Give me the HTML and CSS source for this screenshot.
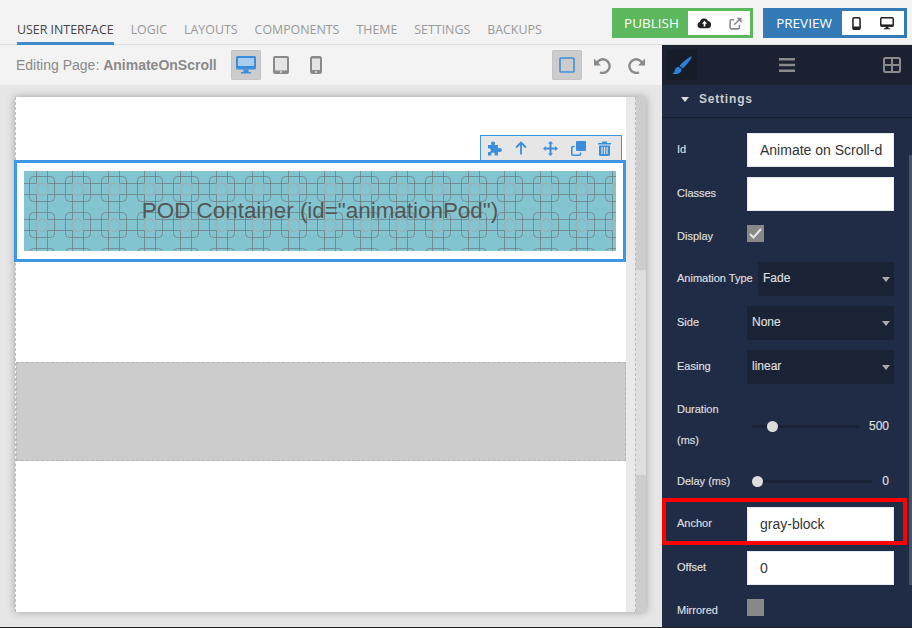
FILE: index.html
```html
<!doctype html>
<html lang="en">
    <head>
        <meta charset="utf-8">
        <title>AnimateOnScroll - User Interface</title>
        <link rel="stylesheet" href="styles.css">
    </head>
    <body>
        <div class="app">
            <header class="topbar">
                <nav class="tabs">
                    <a class="tab active">USER INTERFACE</a>
                    <a class="tab">LOGIC</a>
                    <a class="tab">LAYOUTS</a>
                    <a class="tab">COMPONENTS</a>
                    <a class="tab">THEME</a>
                    <a class="tab">SETTINGS</a>
                    <a class="tab">BACKUPS</a>
                </nav>
                <div class="action publish">
                    <span class="action-name">PUBLISH</span>
                    <div class="action-icons">
                        <svg width="15" height="12" viewBox="0 0 17 14"><path fill="#222" d="M4 13a3.600 3.600 0 0 1-.8-7.100A5 5 0 0 1 12.600 4.600a4.300 4.300 0 0 1 .4 8.400z"/><path fill="#fff" d="M8.500 4.500 11.500 8H9.500v3h-2V8h-2z"/></svg>
                        <svg width="13" height="13" viewBox="0 0 15 15"><path fill="none" stroke="#8a8a8a" stroke-width="1.800" d="M12 9v3.500a1.200 1.200 0 0 1-1.200 1.200H2.500a1.200 1.200 0 0 1-1.200-1.200V4.300a1.200 1.200 0 0 1 1.200-1.200H6M6 9l7-7"/><path fill="#8a8a8a" d="M8.500.8H14.500V6.800z"/></svg>
                    </div>
                </div>
                <div class="action preview">
                    <span class="action-name">PREVIEW</span>
                    <div class="action-icons">
                        <svg width="9" height="13" viewBox="0 0 10 15"><rect x=".9" y=".9" width="8.200" height="13.200" rx="1.500" fill="none" stroke="#222" stroke-width="1.800"/><rect x="1" y="11" width="8" height="3.500" fill="#222"/></svg>
                        <svg width="14" height="13" viewBox="0 0 15 14"><rect x=".8" y=".8" width="13.400" height="9" rx="1" fill="none" stroke="#222" stroke-width="1.600"/><rect x="1" y="8" width="13" height="2.500" fill="#222"/><path fill="#222" d="M6 10.500h3V12h2v1.300H4V12h2z"/></svg>
                    </div>
                </div>
            </header>

            <div class="workspace">
                <div class="editor">
                    <div class="toolbar">
                        <span class="page-name">Editing Page: <b>AnimateOnScroll</b></span>
                        <div class="device-btns">
                            <button class="tool on">
                                <svg width="20" height="18" viewBox="0 0 20 18"><rect y="0" width="20" height="13.500" rx="1.500" fill="#3b8ede"/><rect x="2" y="2" width="16" height="8" fill="#a9cdee"/><path fill="#3b8ede" d="M7.500 13.500h5V16H15v1.500H5V16h2.500z"/></svg>
                            </button>
                            <button class="tool">
                                <svg width="16" height="18" viewBox="0 0 16 18"><rect width="16" height="18" rx="2" fill="#8a8a8a"/><rect x="2" y="2" width="12" height="12.500" fill="#e4e4e4"/><circle cx="8" cy="16" r="1" fill="#e4e4e4"/></svg>
                            </button>
                            <button class="tool">
                                <svg width="12" height="18" viewBox="0 0 12 18"><rect width="12" height="18" rx="2.500" fill="#8a8a8a"/><rect x="2" y="2.500" width="8" height="11.500" fill="#e4e4e4"/><circle cx="6" cy="16" r="1" fill="#e4e4e4"/></svg>
                            </button>
                        </div>
                        <div class="history-btns">
                            <button class="tool on">
                                <svg width="16" height="16" viewBox="0 0 16 16"><rect x="1" y="1" width="14" height="14" rx="1" fill="none" stroke="#3b8ede" stroke-width="1.600"/></svg>
                            </button>
                            <button class="tool">
                                <svg width="18" height="17" viewBox="0 0 18 17"><path fill="none" stroke="#8a8a8a" stroke-width="2.400" d="M3.500 6.500A6.800 6.800 0 1 1 7 15.300"/><path fill="#8a8a8a" d="M1 1.500 8 8.500H1z"/></svg>
                            </button>
                            <button class="tool">
                                <svg width="18" height="17" viewBox="0 0 18 17"><path fill="none" stroke="#8a8a8a" stroke-width="2.400" d="M14.500 6.500A6.800 6.800 0 1 0 11 15.300"/><path fill="#8a8a8a" d="M17 1.500 10 8.500h7z"/></svg>
                            </button>
                        </div>
                    </div>

                    <div class="canvas">
                        <div class="sheet">
                            <div class="page">
                                <div class="selected">
                                    <div class="element-tools">
                                        <svg width="16" height="15" viewBox="0 0 16 15"><path fill="#3b8ede" d="M1 4h3.500C3.500 2.500 4 .5 6 .5S8.500 2.500 7.500 4H11v3.500c1.500-1 3.800-.6 3.800 1.500s-2.300 2.500-3.800 1.500V14.500H7.500c.8-1.500.3-3-1.500-3s-2.300 1.500-1.500 3H1v-3.500c1.200.6 2.800 0 2.800-1.700S2.200 6.700 1 7.500z"/></svg>
                                        <svg width="12" height="14" viewBox="0 0 12 14"><path fill="none" stroke="#3b8ede" stroke-width="1.800" d="M6 13.500V1.500M1 6.500l5-5 5 5"/></svg>
                                        <svg class="move" width="15" height="15" viewBox="0 0 15 15"><path fill="#3b8ede" d="M7.500 0 10 2.800H8.500V6.500H12.200V5L15 7.500 12.200 10V8.500H8.500V12.200H10L7.500 15 5 12.200H6.500V8.500H2.800V10L0 7.500 2.800 5V6.500H6.500V2.800H5z"/></svg>
                                        <svg width="15" height="15" viewBox="0 0 15 15"><rect x="5" y="0" width="10" height="10" rx="1" fill="#3b8ede"/><path fill="none" stroke="#3b8ede" stroke-width="1.600" d="M3.500 5.500H2A1.200 1.200 0 0 0 .8 6.700V13A1.200 1.200 0 0 0 2 14.200H8.300A1.200 1.200 0 0 0 9.500 13V11.500"/></svg>
                                        <svg width="13" height="15" viewBox="0 0 13 15"><path fill="#3b8ede" d="M0 2h4V.5h5V2h4v1.500H0zM1 4.500h11V13.500A1.500 1.500 0 0 1 10.500 15h-8A1.500 1.500 0 0 1 1 13.500z"/><path stroke="#e6e6e6" stroke-width="1.200" d="M4 6v7M6.500 6v7M9 6v7"/></svg>
                                    </div>
                                    <div class="pod">POD Container (id="animationPod")</div>
                                </div>
                                <div class="gray-block"></div>
                            </div>
                            <div class="gutter"></div>
                            <div class="page-scroll"><div class="page-scroll-mid"></div></div>
                        </div>
                    </div>
                </div>

                <aside class="sidebar">
                    <div class="side-tabs">
                        <button class="side-tab on">
                            <svg width="20" height="19" viewBox="0 0 20 19"><path fill="#2f7fd6" d="M19.500.2C16 1.800 10.500 5.800 7.600 9.800l3.200 2.600C14.500 9 18.500 4 19.800.9zM6.600 10.800C3.800 10.900 3 13 2.600 15 2.300 16.500 1.500 17.200.2 17.800c3.500 1 8.800.5 9.500-4.500z"/></svg>
                        </button>
                        <button class="side-tab">
                            <svg width="16" height="14" viewBox="0 0 16 14"><path fill="#8b8b8b" d="M0 0h16v2.400H0zM0 5.800h16v2.400H0zM0 11.600h16V14H0z"/></svg>
                        </button>
                        <button class="side-tab">
                            <svg width="18" height="16" viewBox="0 0 18 16"><rect x="1" y="1" width="16" height="14" rx="1.500" fill="none" stroke="#8b8b8b" stroke-width="2"/><path fill="#8b8b8b" d="M1 7h16v2H1zM8 1h2v14H8z"/></svg>
                        </button>
                    </div>
                    <div class="settings">
                        <div class="settings-head"><i class="caret"></i>Settings</div>
                        <div class="field">
                            <label>Id</label>
                            <div class="text-input">Animate on Scroll-d</div>
                        </div>
                        <div class="field">
                            <label>Classes</label>
                            <div class="text-input"></div>
                        </div>
                        <div class="field check-field">
                            <label>Display</label>
                            <div class="check"><svg width="13" height="11" viewBox="0 0 13 11"><path fill="none" stroke="#e8e8e8" stroke-width="2" d="M1 6l3.500 3.500L12 1"/></svg></div>
                        </div>
                        <div class="field">
                            <label class="auto">Animation Type</label>
                            <div class="select">Fade<i class="caret small"></i></div>
                        </div>
                        <div class="field">
                            <label>Side</label>
                            <div class="select">None<i class="caret small"></i></div>
                        </div>
                        <div class="field">
                            <label>Easing</label>
                            <div class="select">linear<i class="caret small"></i></div>
                        </div>
                        <div class="field slider-field duration">
                            <label>Duration<br>(ms)</label>
                            <div class="slider"><div class="track short"><i class="thumb" style="left:20px"></i></div><span class="value">500</span></div>
                        </div>
                        <div class="field slider-field delay">
                            <label>Delay (ms)</label>
                            <div class="slider"><div class="track long"><i class="thumb" style="left:5px"></i></div><span class="value">0</span></div>
                        </div>
                        <div class="field anchor">
                            <label>Anchor</label>
                            <div class="text-input">gray-block</div>
                        </div>
                        <div class="field">
                            <label>Offset</label>
                            <div class="text-input">0</div>
                        </div>
                        <div class="field check-field">
                            <label>Mirrored</label>
                            <div class="check"></div>
                        </div>
                        <div class="side-scroll"></div>
                    </div>
                </aside>
            </div>
        </div>
    </body>
</html>
```

FILE: styles.css
```css
* {box-sizing: border-box;}
html, body {margin: 0; height: 100%;}
body {font: 14px "Liberation Sans", Arial, sans-serif; overflow: hidden; background: #f3f3f3;}
button {border: 0; padding: 0; background: none; display: flex; align-items: center; justify-content: center;}

.app {width: 912px; height: 628px; display: flex; flex-direction: column; border-bottom: 1px solid #222; overflow: hidden;}

/* top bar */
.topbar {height: 45px; flex: none; display: flex; align-items: flex-start; background: #f3f3f3; border-bottom: 1px solid #ddd; padding: 8px 5px 0 17px;}
.tabs {display: flex; gap: 17px; height: 37px; margin-right: auto;}
.tab {font: 12.4px/15px "Open Sans", sans-serif; color: #999; padding-top: 14px; height: 37px;}
.tab.active {color: #444; border-bottom: 3px solid #428bca;}
.action {height: 30px; display: flex; align-items: center; padding: 3px; color: #fff;}
.action-name {font: 13.5px "Open Sans", sans-serif; flex: 1; text-align: center;}
.action-icons {width: 62px; height: 24px; background: #fff; display: flex; align-items: center; justify-content: space-around;}
.publish {width: 141px; background: #5cb85c; margin-right: 10px;}
.preview {width: 144px; background: #337ab7;}

.workspace {flex: 1; display: flex; min-height: 0;}
.editor {width: 662px; display: flex; flex-direction: column;}

/* toolbar */
.toolbar {height: 40px; flex: none; display: flex; align-items: center; padding: 0 10px 0 16px; background: #f3f3f3;}
.page-name {font-size: 14px; color: #8a8a8a; width: 215px;}
.device-btns {display: flex; gap: 5px; flex: 1;}
.history-btns {display: flex; gap: 5px;}
.tool {width: 30px; height: 30px; border-radius: 2px;}
.tool.on {background: #ccc; box-shadow: inset 0 0 0 1px #c4c4c4;}

/* canvas */
.canvas {flex: 1; min-height: 0; background: #e6e6e6; padding: 12px 16px 15px 15px;}
.sheet {height: 100%; display: flex; box-shadow: 0 0 8px rgba(0,0,0,.3);}
.page {width: 611px; background: #fff; border-left: 1px dashed #bbb; padding-top: 63px;}
.selected {position: relative; height: 102px; margin-left: -2px; border: 3px solid #3e97e4; padding: 8px 7px; background: #fff;}
.element-tools {position: absolute; right: 1px; top: -28px; width: 142px; height: 25px; background: #e6e6e6; border: 1px solid #3e97e4; border-bottom: 0; display: flex; align-items: center; gap: 12px; padding-left: 6px;}
.element-tools .move {margin: 0 1px 0 4px;}
.pod {height: 80px; font-size: 22.4px; line-height: 80px; text-align: center; color: #555; background-color: #82c4cf; background-image: url("data:image/svg+xml,%3Csvg xmlns='http://www.w3.org/2000/svg' width='36' height='36'%3E%3Cg fill='none' stroke='%236f7f85' stroke-opacity='.8'%3E%3Crect x='5.500' y='5.500' width='25' height='25' rx='4'/%3E%3Cpath d='M0 12.500H12.500V0M23.500 0V12.500H36M0 23.500H12.500V36M23.500 36V23.500H36'/%3E%3Ccircle cx='18' cy='18' r='6' stroke='%2397b2b6' stroke-opacity='1' stroke-width='1.500'/%3E%3C/g%3E%3C/svg%3E");}
.gray-block {height: 99px; margin-top: 100px; background: #ccc; border: 1px dashed #b5b5b5;}
.gutter {width: 10px; background: #e9e9e9; border-right: 1px dashed #bbb;}
.page-scroll {width: 10px; background: #cdcdcd; padding-top: 173px;}
.page-scroll-mid {height: 205px; background: #dedede;}

/* sidebar */
.sidebar {flex: 1; display: flex; flex-direction: column; background: #202b46; color: #ddd;}
.side-tabs {height: 40px; flex: none; display: flex; align-items: center; justify-content: space-between; padding: 0 5px; background: #1b2130;}
.side-tab {width: 30px; height: 30px;}
.side-tab.on {background: #171c29;}
.settings {position: relative; flex: 1; padding: 0 18px 0 15px; font-size: 11px;}
.settings-head {height: 33px; margin: 0 -18px 15px -15px; padding: 0 0 4px 19px; border-bottom: 1px solid #171c29; font: bold 12px/27px "Liberation Sans", sans-serif; letter-spacing: .8px; color: #ccc; display: flex; align-items: center;}
.caret {width: 0; height: 0; border: 4px solid transparent; border-top: 5px solid #ddd; border-bottom: 0; margin-right: 10px;}
.caret.small {position: absolute; right: 4px; top: 15px; margin: 0; border-top-color: #aaa;}
.field {display: flex; align-items: center; min-height: 34px; margin-bottom: 10px;}
.field label {width: 70px; flex: none; margin-bottom: 2px; -webkit-text-stroke: .2px #ddd;}
.field label.auto {width: 81px;}
.text-input {flex: 1; height: 34px; background: #fff; border: 1px solid #e4e8f0; color: #333; font-size: 14px; line-height: 32px; padding-left: 12px; white-space: nowrap; overflow: hidden;}
.select {position: relative; flex: 1; height: 34px; background: #1a2235; font-size: 12px; line-height: 32px; padding-left: 5px; color: #ddd; -webkit-text-stroke: .2px #ddd;}
.check-field {height: 17px; min-height: 17px; margin: 14px 0 20px; align-items: flex-start;}
.check-field label {margin: 5px 0 0;}
.check {width: 17px; height: 17px; background: #888; display: flex; align-items: center; justify-content: center;}
.slider-field label {line-height: 31px; margin-bottom: 0;}
.duration {height: 62px; margin-bottom: 14px;}
.duration .slider {margin-top: 2px;}
.delay {height: 22px; margin-bottom: 15px; min-height: 22px;}
.slider {flex: 1; display: flex; align-items: center; padding: 0 5px; justify-content: space-between;}
.track {position: relative; height: 3px; background: #1a2235;}
.track.short {width: 107px;}
.track.long {width: 120px;}
.thumb {position: absolute; top: -4px; width: 11px; height: 11px; margin-left: -5px; border-radius: 50%; background: #ddd;}
.value {font-size: 12px; color: #ddd; -webkit-text-stroke: .2px #ddd;}
.anchor {position: relative;}
.anchor::after {content: ""; position: absolute; left: -15px; right: -13px; top: -9px; bottom: -4px; border: 4px solid #f00;}
.side-scroll {position: absolute; right: 0; top: 70px; width: 3px; height: 430px; background: #4a5266;}
```
